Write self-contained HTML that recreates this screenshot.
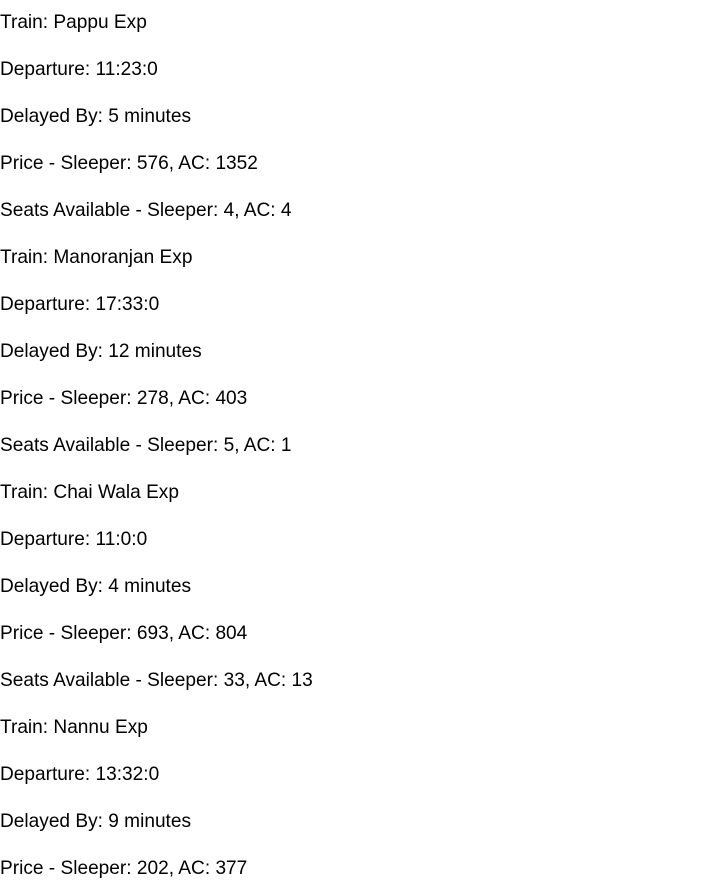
<!DOCTYPE html>
<html><head><meta charset="utf-8"><style>
html,body{margin:0;padding:0;background:#fff;}
body{width:722px;height:888px;overflow:hidden;font-family:"Liberation Sans",sans-serif;font-size:19.1px;color:#000;padding-top:1px;box-sizing:border-box;}
p{margin:0;height:47px;line-height:44px;white-space:nowrap;}
</style></head><body>
<p>Train: Pappu Exp</p>
<p>Departure: 11:23:0</p>
<p>Delayed By: 5 minutes</p>
<p>Price - Sleeper: 576, AC: 1352</p>
<p>Seats Available - Sleeper: 4, AC: 4</p>
<p>Train: Manoranjan Exp</p>
<p>Departure: 17:33:0</p>
<p>Delayed By: 12 minutes</p>
<p>Price - Sleeper: 278, AC: 403</p>
<p>Seats Available - Sleeper: 5, AC: 1</p>
<p>Train: Chai Wala Exp</p>
<p>Departure: 11:0:0</p>
<p>Delayed By: 4 minutes</p>
<p>Price - Sleeper: 693, AC: 804</p>
<p>Seats Available - Sleeper: 33, AC: 13</p>
<p>Train: Nannu Exp</p>
<p>Departure: 13:32:0</p>
<p>Delayed By: 9 minutes</p>
<p>Price - Sleeper: 202, AC: 377</p>
</body></html>
